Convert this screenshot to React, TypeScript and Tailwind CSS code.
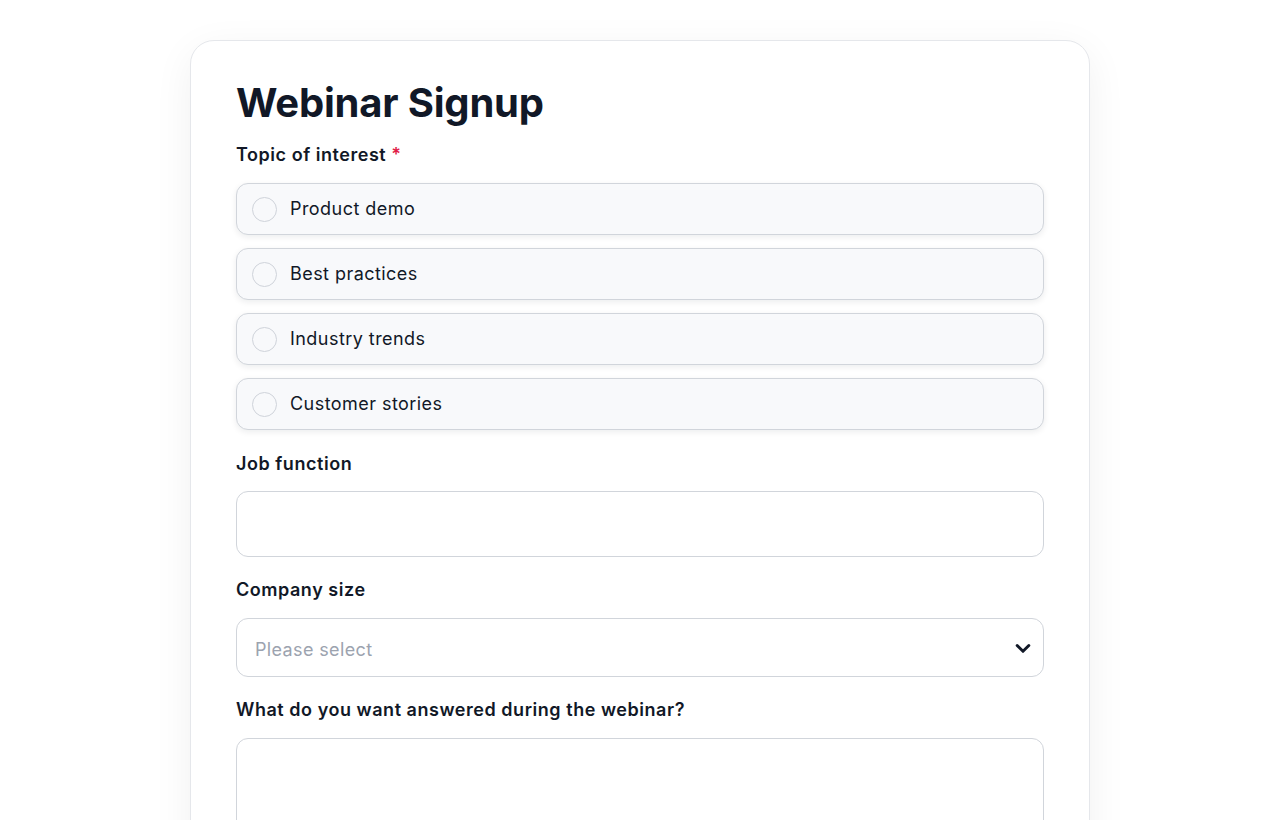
import React, { useState } from "react";

const topics = ["Product demo", "Best practices", "Industry trends", "Customer stories"];

const Label = ({ children, required }: { children: React.ReactNode; required?: boolean }) => (
  <label className="block text-[18px] font-semibold leading-[24px] tracking-[0.03em] text-[#111827]">
    {children}
    {required && <span className="ml-[5px] text-[#e11d48]">*</span>}
  </label>
);

export default function App() {
  const [topic, setTopic] = useState<string>("");

  return (
    <div
      className="min-h-screen bg-white pt-[40px]"
      style={{ fontFamily: "Inter, 'Noto Sans', sans-serif" }}
    >
      <div className="mx-auto w-[900px] rounded-[24px] border border-[#e5e7eb] bg-white px-[45px] pb-10 pt-[36px] shadow-[0_10px_40px_rgba(17,24,39,0.06)]">
        <h1 className="text-[40px] font-bold leading-[52px] tracking-[-0.005em] text-[#111827]">
          Webinar Signup
        </h1>

        <div className="mt-[14px]">
          <Label required>Topic of interest</Label>
          <div className="mt-[16px] flex flex-col gap-[13px]">
            {topics.map((t) => (
              <button
                key={t}
                type="button"
                onClick={() => setTopic(t)}
                className="flex h-[52px] items-center gap-[13px] rounded-[12px] border border-[#d1d5db] bg-[#f8f9fb] px-[15px] text-left shadow-[0_2px_6px_rgba(17,24,39,0.08)]"
              >
                <span className="flex h-[25px] w-[25px] items-center justify-center rounded-full border border-[#cfd3da] bg-[#f8f9fb]">
                  {topic === t && <span className="h-[11px] w-[11px] rounded-full bg-[#111827]" />}
                </span>
                <span className="text-[18px] leading-[24px] tracking-[0.025em] text-[#111827]">{t}</span>
              </button>
            ))}
          </div>
        </div>

        <div className="mt-[22px]">
          <Label>Job function</Label>
          <input
            type="text"
            className="mt-[15px] block h-[66px] w-full rounded-[12px] border border-[#d1d5db] bg-white px-[18px] text-[18px] outline-none"
          />
        </div>

        <div className="mt-[21px]">
          <Label>Company size</Label>
          <div className="relative mt-[16px]">
            <select
              defaultValue=""
              className="block h-[59px] w-full appearance-none rounded-[12px] border border-[#d1d5db] bg-white px-[18px] pt-[3px] text-[18px] tracking-[0.02em] text-[#9ca3af] outline-none"
            >
              <option value="" disabled>
                Please select
              </option>
              <option>1-10</option>
              <option>11-50</option>
              <option>51-200</option>
              <option>201+</option>
            </select>
            <svg
              className="pointer-events-none absolute right-[11px] top-1/2 h-[20px] w-[20px] -translate-y-1/2 text-[#111827]"
              viewBox="0 0 24 24"
              fill="none"
              stroke="currentColor"
              strokeWidth={3.5}
              strokeLinecap="round"
              strokeLinejoin="round"
            >
              <path d="m5 9 7 7 7-7" />
            </svg>
          </div>
        </div>

        <div className="mt-[21px]">
          <Label>What do you want answered during the webinar?</Label>
          <textarea className="mt-[16px] block h-[140px] w-full resize-none rounded-[12px] border border-[#d1d5db] bg-white px-[18px] py-[14px] text-[18px] outline-none" />
        </div>
      </div>
    </div>
  );
}
